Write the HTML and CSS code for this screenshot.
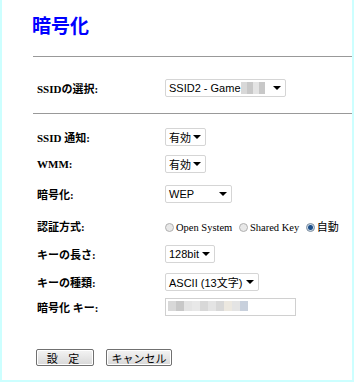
FILE: index.html
```html
<!DOCTYPE html>
<html>
<head>
<title>暗号化</title>
<link rel="stylesheet" href="styles.css">
</head>
<body>
<div id="frame">
  <h1 id="title">暗号化</h1>
  <hr class="rule">
  <table class="settings first">
    <tr>
      <td class="label">SSIDの選択:</td>
      <td><span class="select wide">SSID2 - Game<span class="blur"><i></i><i></i><i></i><i></i></span><b class="arrow"></b></span></td>
    </tr>
  </table>
  <hr class="rule">
  <table class="settings second">
    <tr class="r1">
      <td class="label">SSID 通知:</td>
      <td><span class="select small">有効<b class="arrow"></b></span></td>
    </tr>
    <tr class="r2">
      <td class="label">WMM:</td>
      <td><span class="select small">有効<b class="arrow"></b></span></td>
    </tr>
    <tr class="r3">
      <td class="label">暗号化:</td>
      <td><span class="select wep">WEP<b class="arrow"></b></span></td>
    </tr>
    <tr class="r4">
      <td class="label">認証方式:</td>
      <td class="radios">
        <span class="radio"></span><span class="opt">Open System</span>
        <span class="radio"></span><span class="opt">Shared Key</span>
        <span class="radio on"></span><span class="opt jp">自動</span>
      </td>
    </tr>
    <tr class="r5">
      <td class="label">キーの長さ:</td>
      <td><span class="select bits">128bit<b class="arrow"></b></span></td>
    </tr>
    <tr class="r6">
      <td class="label">キーの種類:</td>
      <td><span class="select ascii">ASCII (13文字)<b class="arrow"></b></span></td>
    </tr>
    <tr class="r7">
      <td class="label">暗号化 キー:</td>
      <td><span class="textbox"><span class="blur key"><i></i><i></i><i></i><i></i><i></i><i></i><i></i><i></i><i></i><i></i></span></span></td>
    </tr>
  </table>
  <div id="buttons">
    <button class="btn set">設 定</button>
    <button class="btn cancel">キャンセル</button>
  </div>
</div>
</body>
</html>
```

FILE: styles.css
```css
html, body {
  margin: 0;
  padding: 0;
  background-color: #ffffff;
}

#frame {
  width: 350px;
  height: 380px;
  border-left: 2px solid #ccffff;
  border-right: 2px solid #ccffff;
  border-bottom: 2px solid #ccffff;
  font-family: "Liberation Sans", "Noto Sans CJK JP", sans-serif;
  font-size: 11px;
  color: #000;
}

#title {
  margin: 0;
  padding: 12px 0 0 30px;
  height: 33px;
  font-family: "Noto Sans CJK JP", sans-serif;
  font-size: 19px;
  font-weight: bold;
  color: #0000ff;
  line-height: 26px;
}

.rule {
  margin: 11px 0 0 31px;
  border: none;
  border-top: 1px solid #999999;
  height: 0;
}

.settings {
  margin-left: 33px;
  border-collapse: collapse;
}

.settings td {
  padding: 0;
}

.settings.first {
  margin-top: 21px;
  margin-bottom: 15px;
}

.settings.first td {
  height: 20px;
}

.settings.second {
  margin-top: 10px;
}

.r1 td { height: 26px; }
.r2 td { height: 28px; }
.r3 td { height: 32px; }
.r4 td { height: 32px; }
.r5 td { height: 24px; }
.r6 td { height: 32px; }
.r7 td { height: 16px; }

.label {
  width: 128px;
  font-weight: bold;
  font-size: 11px;
  padding-left: 2px !important;
  font-family: "Liberation Serif", "Noto Sans CJK JP", serif;
}

.select {
  display: inline-flex;
  align-items: center;
  position: relative;
  box-sizing: border-box;
  height: 18px;
  padding-left: 3px;
  border: 1px solid #d5d5d5;
  border-radius: 2px;
  background: #fff;
  font-size: 11px;
  vertical-align: middle;
}

.select.wide { width: 121px; }
.select.small { width: 41px; }
.select.wep { width: 67px; }
.select.bits { width: 50px; }
.select.ascii { width: 94px; }

.arrow {
  position: absolute;
  right: 4px;
  top: 6px;
  width: 0;
  height: 0;
  border-left: 4px solid transparent;
  border-right: 4px solid transparent;
  border-top: 4px solid #000;
}

.blur {
  display: inline-flex;
  height: 12px;
}

.blur i {
  display: block;
  width: 6px;
  height: 12px;
  background: #d8d8d8;
}

.blur i:nth-child(2n) { background: #c8c8c8; }
.blur i:nth-child(3n) { background: #e4e4e4; }

.textbox {
  display: inline-flex;
  align-items: center;
  box-sizing: border-box;
  width: 131px;
  height: 18px;
  padding-left: 2px;
  border: 1px solid #d0d0d0;
  vertical-align: middle;
}

.blur.key i {
  width: 8px;
  height: 10px;
}

.blur.key i:nth-child(4) { background: #e8e8e8; }
.blur.key i:nth-child(8) { background: #ece8e0; }
.blur.key i:nth-child(10) { background: #c8d0dc; }

.radios {
  font-family: "Liberation Serif", "Noto Sans CJK JP", serif;
  font-size: 10.5px;
  white-space: nowrap;
}

.radio {
  display: inline-block;
  box-sizing: border-box;
  width: 9px;
  height: 9px;
  border: 1px solid #b0b0b0;
  border-radius: 50%;
  background: #e8e8e8;
  vertical-align: -1px;
  margin-right: 2px;
}

.radio.on {
  background: radial-gradient(circle, #1c4f8a 0, #1c4f8a 2px, #c8d8e8 3px);
  border-color: #8090a0;
}

.opt {
  margin-right: 4px;
}

.opt.jp {
  font-family: "Noto Sans CJK JP", sans-serif;
  font-size: 11px;
}

#buttons {
  margin: 33px 0 0 34px;
  display: flex;
  gap: 12px;
}

.btn {
  box-sizing: border-box;
  height: 17px;
  padding: 0;
  border: 1px solid #707070;
  border-radius: 2px;
  background: linear-gradient(#f4f4f4, #d8d8d8);
  font-family: "Noto Sans CJK JP", sans-serif;
  font-size: 11px;
  line-height: 14px;
  box-shadow: inset 0 0 0 1px #ffffff;
}

.btn.set {
  width: 58px;
  letter-spacing: 4px;
}

.btn.cancel {
  width: 66px;
}
```
